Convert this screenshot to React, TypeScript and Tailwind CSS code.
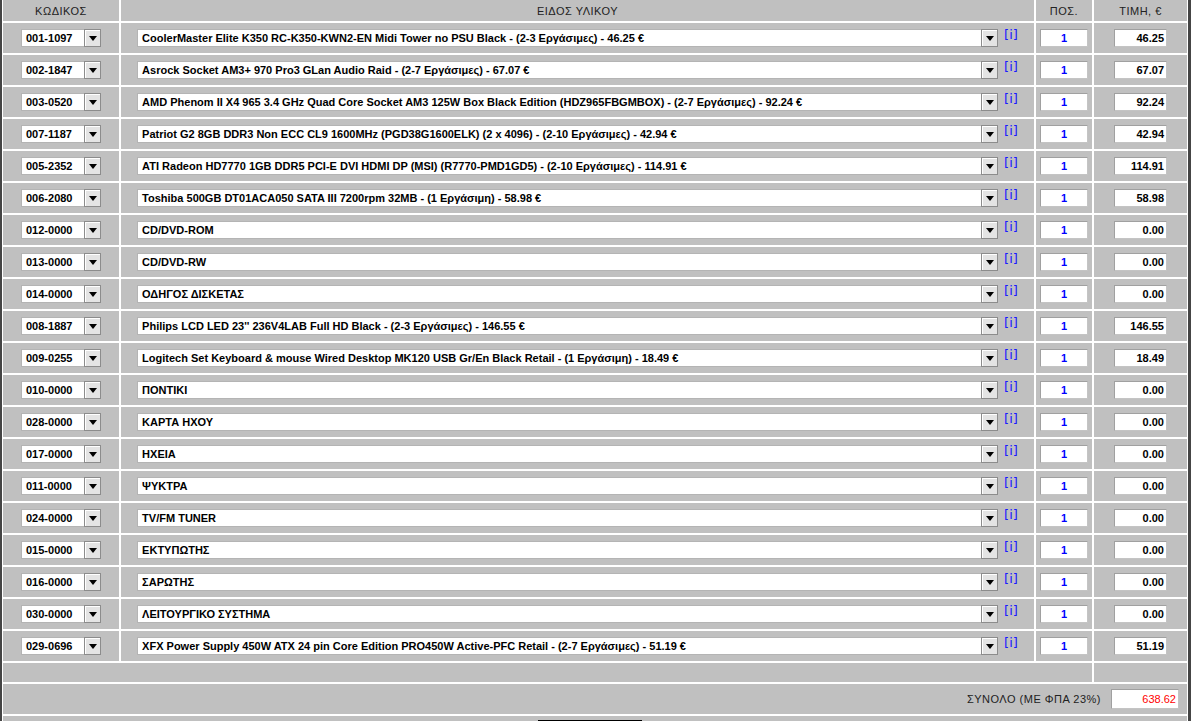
import React from "react";

type Line = { code: string; item: string; price: string };

const LINES: Line[] = [
  { code: "001-1097", item: "CoolerMaster Elite K350 RC-K350-KWN2-EN Midi Tower no PSU Black - (2-3 Εργάσιμες) - 46.25 €", price: "46.25" },
  { code: "002-1847", item: "Asrock Socket AM3+ 970 Pro3 GLan Audio Raid - (2-7 Εργάσιμες) - 67.07 €", price: "67.07" },
  { code: "003-0520", item: "AMD Phenom II X4 965 3.4 GHz Quad Core Socket AM3 125W Box Black Edition (HDZ965FBGMBOX) - (2-7 Εργάσιμες) - 92.24 €", price: "92.24" },
  { code: "007-1187", item: "Patriot G2 8GB DDR3 Non ECC CL9 1600MHz (PGD38G1600ELK) (2 x 4096) - (2-10 Εργάσιμες) - 42.94 €", price: "42.94" },
  { code: "005-2352", item: "ATI Radeon HD7770 1GB DDR5 PCI-E DVI HDMI DP (MSI) (R7770-PMD1GD5) - (2-10 Εργάσιμες) - 114.91 €", price: "114.91" },
  { code: "006-2080", item: "Toshiba 500GB DT01ACA050 SATA III 7200rpm 32MB - (1 Εργάσιμη) - 58.98 €", price: "58.98" },
  { code: "012-0000", item: "CD/DVD-ROM", price: "0.00" },
  { code: "013-0000", item: "CD/DVD-RW", price: "0.00" },
  { code: "014-0000", item: "ΟΔΗΓΟΣ ΔΙΣΚΕΤΑΣ", price: "0.00" },
  { code: "008-1887", item: "Philips LCD LED 23'' 236V4LAB Full HD Black - (2-3 Εργάσιμες) - 146.55 €", price: "146.55" },
  { code: "009-0255", item: "Logitech Set Keyboard & mouse Wired Desktop MK120 USB Gr/En Black Retail - (1 Εργάσιμη) - 18.49 €", price: "18.49" },
  { code: "010-0000", item: "ΠΟΝΤΙΚΙ", price: "0.00" },
  { code: "028-0000", item: "ΚΑΡΤΑ ΗΧΟΥ", price: "0.00" },
  { code: "017-0000", item: "ΗΧΕΙΑ", price: "0.00" },
  { code: "011-0000", item: "ΨΥΚΤΡΑ", price: "0.00" },
  { code: "024-0000", item: "TV/FM TUNER", price: "0.00" },
  { code: "015-0000", item: "ΕΚΤΥΠΩΤΗΣ", price: "0.00" },
  { code: "016-0000", item: "ΣΑΡΩΤΗΣ", price: "0.00" },
  { code: "030-0000", item: "ΛΕΙΤΟΥΡΓΙΚΟ ΣΥΣΤΗΜΑ", price: "0.00" },
  { code: "029-0696", item: "XFX Power Supply 450W ATX 24 pin Core Edition PRO450W Active-PFC Retail - (2-7 Εργάσιμες) - 51.19 €", price: "51.19" },
];

function DropButton() {
  return (
    <div className="flex h-full w-[17px] shrink-0 items-center justify-center border border-[#8c8c8c] bg-[#e4e4e4] shadow-[inset_1px_1px_0_#ffffff]">
      <svg width="8" height="5" viewBox="0 0 8 5">
        <path d="M0 0h8L4 5z" fill="#000" />
      </svg>
    </div>
  );
}

function FakeSelect({ value, width }: { value: string; width: string }) {
  return (
    <div className={`flex h-[18px] ${width}`}>
      <div className="flex flex-1 items-center overflow-hidden whitespace-nowrap border border-r-0 border-[#b4b4b4] bg-white pl-[4px] text-[11px] font-bold text-black">
        {value}
      </div>
      <DropButton />
    </div>
  );
}

const cell = "bg-[#c0c0c0]";
const head = `${cell} flex h-[21px] items-center justify-center pt-[2px] text-[11px] tracking-[0.5px] text-[#222]`;

export default function App() {
  return (
    <div
      className="h-[721px] w-[1191px] overflow-hidden border-l-2 border-r-[3px] border-[#454545] bg-white px-[1px]"
      style={{ fontFamily: '"Liberation Sans", Arial, sans-serif' }}
    >
      <div className="grid grid-cols-[116px_913px_56px_93px] gap-[2px]">
        {/* Header */}
        <div className={head}>ΚΩΔΙΚΟΣ</div>
        <div className={head}>ΕΙΔΟΣ ΥΛΙΚΟΥ</div>
        <div className={head}>ΠΟΣ.</div>
        <div className={head}>ΤΙΜΗ, €</div>

        {/* Lines */}
        {LINES.map((l) => (
          <React.Fragment key={l.code + l.item}>
            <div className={`${cell} flex h-[30px] items-center justify-center`}>
              <FakeSelect value={l.code} width="w-[80px]" />
            </div>
            <div className={`${cell} flex h-[30px] items-start justify-center gap-[6px]`}>
              <div className="mt-[6px]">
                <FakeSelect value={l.item} width="w-[861px]" />
              </div>
              <span
                className="mt-[4px] text-[13px] leading-[15px] text-[#1a1aff]"
                style={{ fontFamily: '"DejaVu Sans", Verdana, sans-serif' }}
              >
                [i]
              </span>
            </div>
            <div className={`${cell} flex h-[30px] items-center justify-center`}>
              <div className="flex h-[18px] w-[48px] items-center justify-center border border-[#c4c4c4] border-l-[#a0a0a0] border-t-[#a0a0a0] bg-white text-[11px] font-bold text-[#0000ff]">
                1
              </div>
            </div>
            <div className={`${cell} flex h-[30px] items-center justify-center`}>
              <div className="flex h-[18px] w-[53px] items-center justify-end border border-[#c4c4c4] border-l-[#a0a0a0] border-t-[#a0a0a0] bg-white pr-[2px] text-[11px] font-bold text-black">
                {l.price}
              </div>
            </div>
          </React.Fragment>
        ))}

        {/* Spacer row */}
        <div className={`${cell} col-span-3 h-[19px]`} />
        <div className={`${cell} h-[19px]`} />

        {/* Total */}
        <div className={`${cell} col-span-4 flex h-[30px] items-center justify-end gap-[10px] pr-[8px]`}>
          <span className="text-[11px] tracking-[0.5px] text-[#222]">ΣΥΝΟΛΟ (ΜΕ ΦΠΑ 23%)</span>
          <div className="flex h-[20px] w-[68px] items-center justify-end border border-[#c4c4c4] border-l-[#a0a0a0] border-t-[#a0a0a0] bg-white pr-[2px] text-[11px] text-[#ff0000]">
            638.62
          </div>
        </div>

        {/* Actions */}
        <div className={`${cell} col-span-4 flex h-[40px] items-start pl-[535px] pt-[4px]`}>
          <button className="h-[24px] w-[104px] border border-black bg-[#ececec] text-[11px]">
            &nbsp;
          </button>
        </div>
      </div>
    </div>
  );
}
